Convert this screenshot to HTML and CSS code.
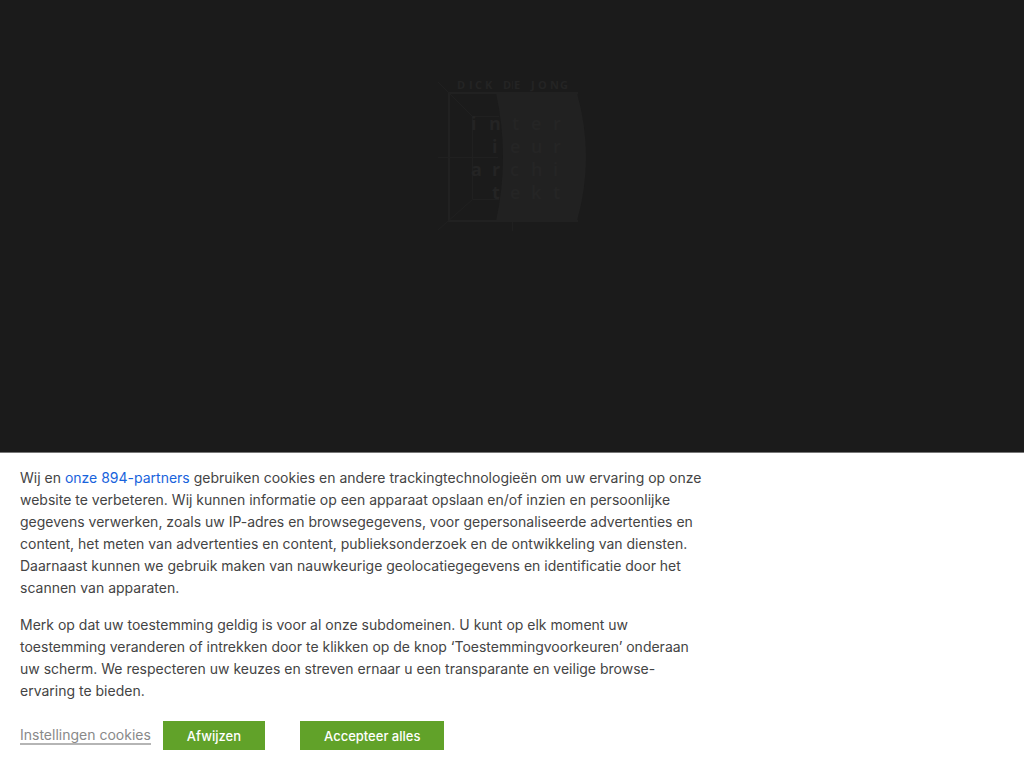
FILE: index.html
```html
<!DOCTYPE html>
<html lang="nl">
<head>
  <meta charset="UTF-8" />
  <meta name="viewport" content="width=device-width, initial-scale=1.0"/>
  <title>Dick de Jong Interieurarchitekt</title>
  <link rel="stylesheet" href="styles.css">
</head>
<body>

  <!-- Intro with logo -->
  <main class="intro">
    <svg class="logo" width="150" height="156" viewBox="0 0 150 156" role="img" aria-label="Dick de Jong interieurarchitekt">
      <path class="logo-panel" d="M59 15H140Q158 79 140 143H59Q73 79 59 15Z"/>
      <path class="logo-frame" d="M141 15H12V143H141"/>
      <path class="logo-line" d="M1 4L35.5 38.5H62M35.5 38V121.5H62M35.5 121.5L1 152M1 79.5H61M75.5 144V153M75.5 11V3"/>
      <text class="logo-name" y="11" x="20 32 38 48 66 77 94 101 113 123">DICKDEJONG</text>
      <text class="logo-text" y="52" x="34 52">in</text>
      <text class="logo-text faint" y="52" x="75 94 116">ter</text>
      <text class="logo-text" y="75" x="55">i</text>
      <text class="logo-text faint" y="75" x="73 94 116">eur</text>
      <text class="logo-text" y="98" x="34 55">ar</text>
      <text class="logo-text faint" y="98" x="73 94 116">chi</text>
      <text class="logo-text" y="121" x="55">t</text>
      <text class="logo-text faint" y="121" x="73 94 116">ekt</text>
    </svg>
  </main>

  <!-- Cookie bar -->
  <section class="cookie-bar" aria-label="Cookies">
    <div class="cookie-text">
      <p>Wij en <a class="partners" href="#">onze 894-partners</a> gebruiken cookies en andere trackingtechnologieën om uw ervaring op onze website te verbeteren. Wij kunnen informatie op een apparaat opslaan en/of inzien en persoonlijke gegevens verwerken, zoals uw IP-adres en browsegegevens, voor gepersonaliseerde advertenties en content, het meten van advertenties en content, publieksonderzoek en de ontwikkeling van diensten. Daarnaast kunnen we gebruik maken van nauwkeurige geolocatiegegevens en identificatie door het scannen van apparaten.</p>
      <p>Merk op dat uw toestemming geldig is voor al onze subdomeinen. U kunt op elk moment uw toestemming veranderen of intrekken door te klikken op de knop ‘Toestemmingvoorkeuren’ onderaan uw scherm. We respecteren uw keuzes en streven ernaar u een transparante en veilige browse-ervaring te bieden.</p>
    </div>
    <div class="cookie-actions">
      <a class="settings" href="#">Instellingen cookies</a>
      <button class="btn reject" type="button">Afwijzen</button>
      <button class="btn" type="button">Accepteer alles</button>
    </div>
  </section>

</body>
</html>
```

FILE: styles.css
```css
* {
  box-sizing: border-box;
}

body {
  margin: 0;
  min-height: 100vh;
  display: flex;
  flex-direction: column;
  background: #1b1b1b;
  color: #444;
  font-family: Inter, sans-serif;
  font-size: 14px;
  line-height: 22px;
}

.intro {
  flex: 1;
  padding-top: 78px;
  text-align: center;
}

.logo {
  display: inline-block;
}

.logo-panel {
  fill: #212121;
}

.logo-frame {
  fill: none;
  stroke: #212121;
  stroke-width: 2;
}

.logo-line {
  fill: none;
  stroke: #202020;
}

.logo-name,
.logo-text {
  font-family: "Open Sans", sans-serif;
  font-weight: 700;
  fill: #242424;
}

.logo-name {
  font-size: 11px;
}

.logo-text {
  font-size: 18px;
}

.faint {
  font-weight: 600;
  fill: #252525;
}

.cookie-bar {
  padding: 14px 20px 18px;
  background: #fff;
  border-top: 1px solid #777;
}

.cookie-text {
  max-width: 690px;
}

.cookie-text p {
  margin: 0 0 15px;
}

.partners {
  color: #1863dc;
  text-decoration: none;
}

.cookie-actions {
  display: flex;
  align-items: center;
  padding-top: 4px;
}

.settings {
  margin-right: 12px;
  color: #898989;
  line-height: 16px;
  text-decoration: none;
  border-bottom: 2px solid #b5b5b5;
}

.btn {
  height: 29px;
  padding: 0 24px;
  border: none;
  background: #61a229;
  color: #fff;
  font-family: inherit;
  font-size: 13px;
  font-weight: 500;
  cursor: pointer;
}

.btn:hover {
  background: #528a22;
}

.reject {
  margin-right: 35px;
}
```
